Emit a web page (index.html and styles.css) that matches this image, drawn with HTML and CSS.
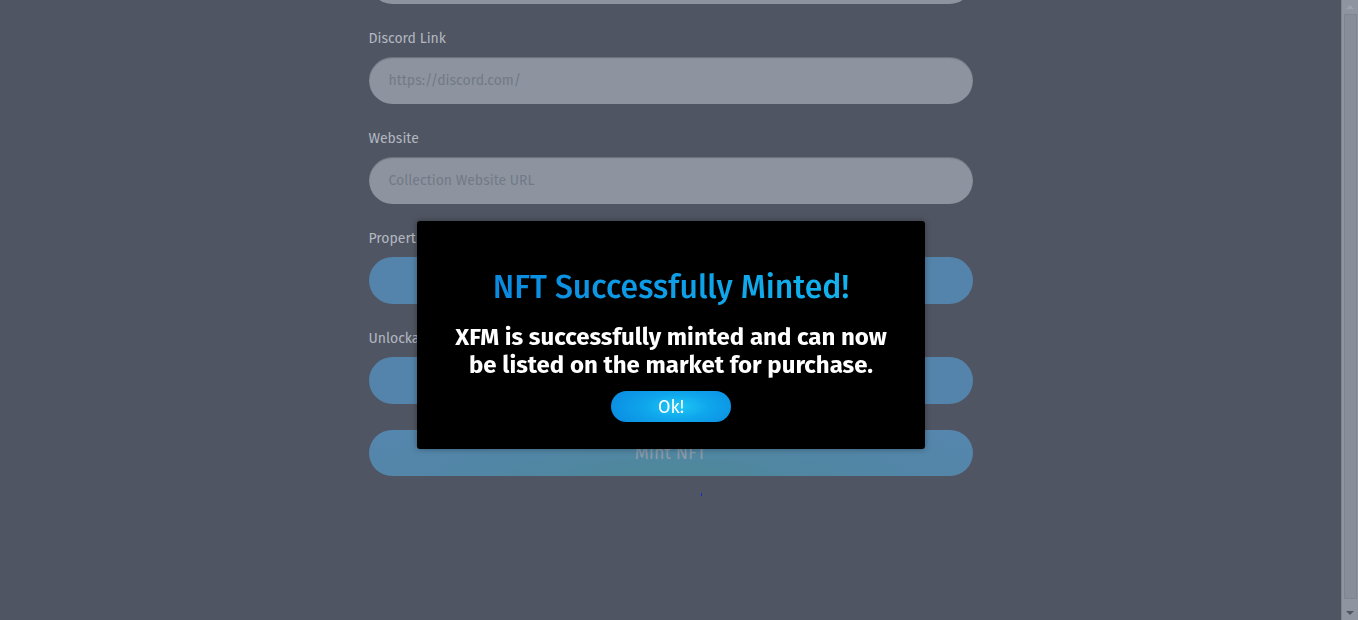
FILE: index.html
```html
<!DOCTYPE html>
<html lang="en">
<head>
<meta charset="utf-8">
<title>Mint NFT</title>
<link rel="stylesheet" href="styles.css">
</head>
<body>
<div class="app">
  <main class="page">
    <form class="form">
      <div class="field field-cut">
        <div class="input"></div>
      </div>
      <div class="field">
        <label class="label">Discord Link</label>
        <div class="input"><span class="placeholder">https://discord.com/</span></div>
      </div>
      <div class="field">
        <label class="label">Website</label>
        <div class="input"><span class="placeholder">Collection Website URL</span></div>
      </div>
      <div class="field">
        <label class="label">Properties</label>
        <div class="input input-blue"></div>
      </div>
      <div class="field">
        <label class="label">Unlockable Content</label>
        <div class="input input-blue"></div>
      </div>
      <div class="mint">Mint NFT</div>
      <div class="dot-row"><span class="dot"></span></div>
    </form>
  </main>
  <div class="scrollbar">
    <div class="sb-arrow sb-up"></div>
    <div class="sb-thumb"></div>
    <div class="sb-arrow sb-down"></div>
  </div>
</div>

<div class="overlay">
  <div class="modal">
    <h2 class="modal-title">NFT Successfully Minted!</h2>
    <p class="modal-text">XFM is successfully minted and can now<br>be listed on the market for purchase.</p>
    <button class="ok" type="button">Ok!</button>
  </div>
</div>
</body>
</html>
```

FILE: styles.css
```css
* { box-sizing: border-box; }

html, body {
  margin: 0;
  height: 100%;
  overflow: hidden;
}

body {
  font-family: "Fira Sans", Lato, "Noto Sans", sans-serif;
  background: #4f5562;
}

.app {
  display: flex;
  height: 100%;
}

.page {
  flex: 1;
  min-width: 0;
}

.form {
  width: 604px;
  margin: 0 auto;
  display: flex;
  flex-direction: column;
}

.field {
  display: flex;
  flex-direction: column;
  margin-bottom: 23px;
}

.field-cut {
  margin-top: -43px;
}

.label {
  font-size: 14px;
  line-height: 20px;
  padding-top: 2px;
  color: #b3b8c0;
  margin-bottom: 8px;
}

.input {
  height: 47px;
  border-radius: 24px;
  background: #8d949f;
  box-shadow: inset 0 1px 1px rgba(40, 45, 55, 0.35);
  display: flex;
  align-items: center;
  padding: 0 20px;
}

.placeholder {
  font-size: 14px;
  color: #727a86;
}

.input-blue {
  background: #5484ab;
  box-shadow: none;
}

.mint {
  margin-top: 3px;
  height: 46px;
  border-radius: 24px;
  background: radial-gradient(ellipse 60% 140% at 50% 100%, #4e889a 0%, #5286a6 55%, #5586ad 100%);
  color: #8b9aa8;
  font-size: 18px;
  display: flex;
  align-items: center;
  justify-content: center;
}

.dot-row {
  display: flex;
  justify-content: center;
  padding-top: 17px;
  padding-left: 62px;
}

.dot {
  width: 1px;
  height: 3px;
  background: #1a2cc8;
}

.scrollbar {
  width: 17px;
  flex: none;
  background: #8e95a0;
  border-left: 1px solid #7d8490;
  display: flex;
  flex-direction: column;
  align-items: center;
  padding: 5px 0;
}

.sb-arrow {
  width: 0;
  height: 0;
  border-left: 4px solid transparent;
  border-right: 4px solid transparent;
}

.sb-up {
  border-bottom: 4px solid #9ea4ad;
  margin-bottom: 5px;
}

.sb-down {
  border-top: 4px solid #4f5562;
  margin-top: 12px;
}

.sb-thumb {
  flex: 1;
  width: 13px;
  background: #878e99;
  border: 1px solid #7f8692;
}

.overlay {
  position: fixed;
  top: 0;
  left: 0;
  right: 17px;
  bottom: 0;
  display: flex;
  justify-content: center;
  align-items: flex-start;
  padding-top: 221px;
  padding-left: 1px;
}

.modal {
  width: 508px;
  height: 228px;
  background: #000;
  border-radius: 3px;
  box-shadow: 0 0 6px rgba(0, 0, 0, 0.35);
  display: flex;
  flex-direction: column;
  align-items: center;
  padding-top: 46px;
}

.modal-title {
  margin: 0;
  font-size: 32px;
  line-height: 40px;
  font-weight: 500;
  background: linear-gradient(90deg, #0a8ae0 0%, #12b4ee 100%);
  -webkit-background-clip: text;
  background-clip: text;
  color: transparent;
  -webkit-text-fill-color: transparent;
}

.modal-text {
  margin: 16px 0 0;
  font-size: 24px;
  line-height: 28px;
  font-weight: 700;
  color: #fff;
  text-align: center;
}

.ok {
  margin-top: 12px;
  width: 120px;
  height: 31px;
  border: none;
  border-radius: 16px;
  background: radial-gradient(ellipse 60% 90% at 55% 50%, #1fc8f6 0%, #0fa6ec 45%, #0a8ce2 100%);
  color: #fff;
  font-family: inherit;
  font-size: 18px;
  font-weight: 400;
  padding: 0;
  cursor: pointer;
}
```
